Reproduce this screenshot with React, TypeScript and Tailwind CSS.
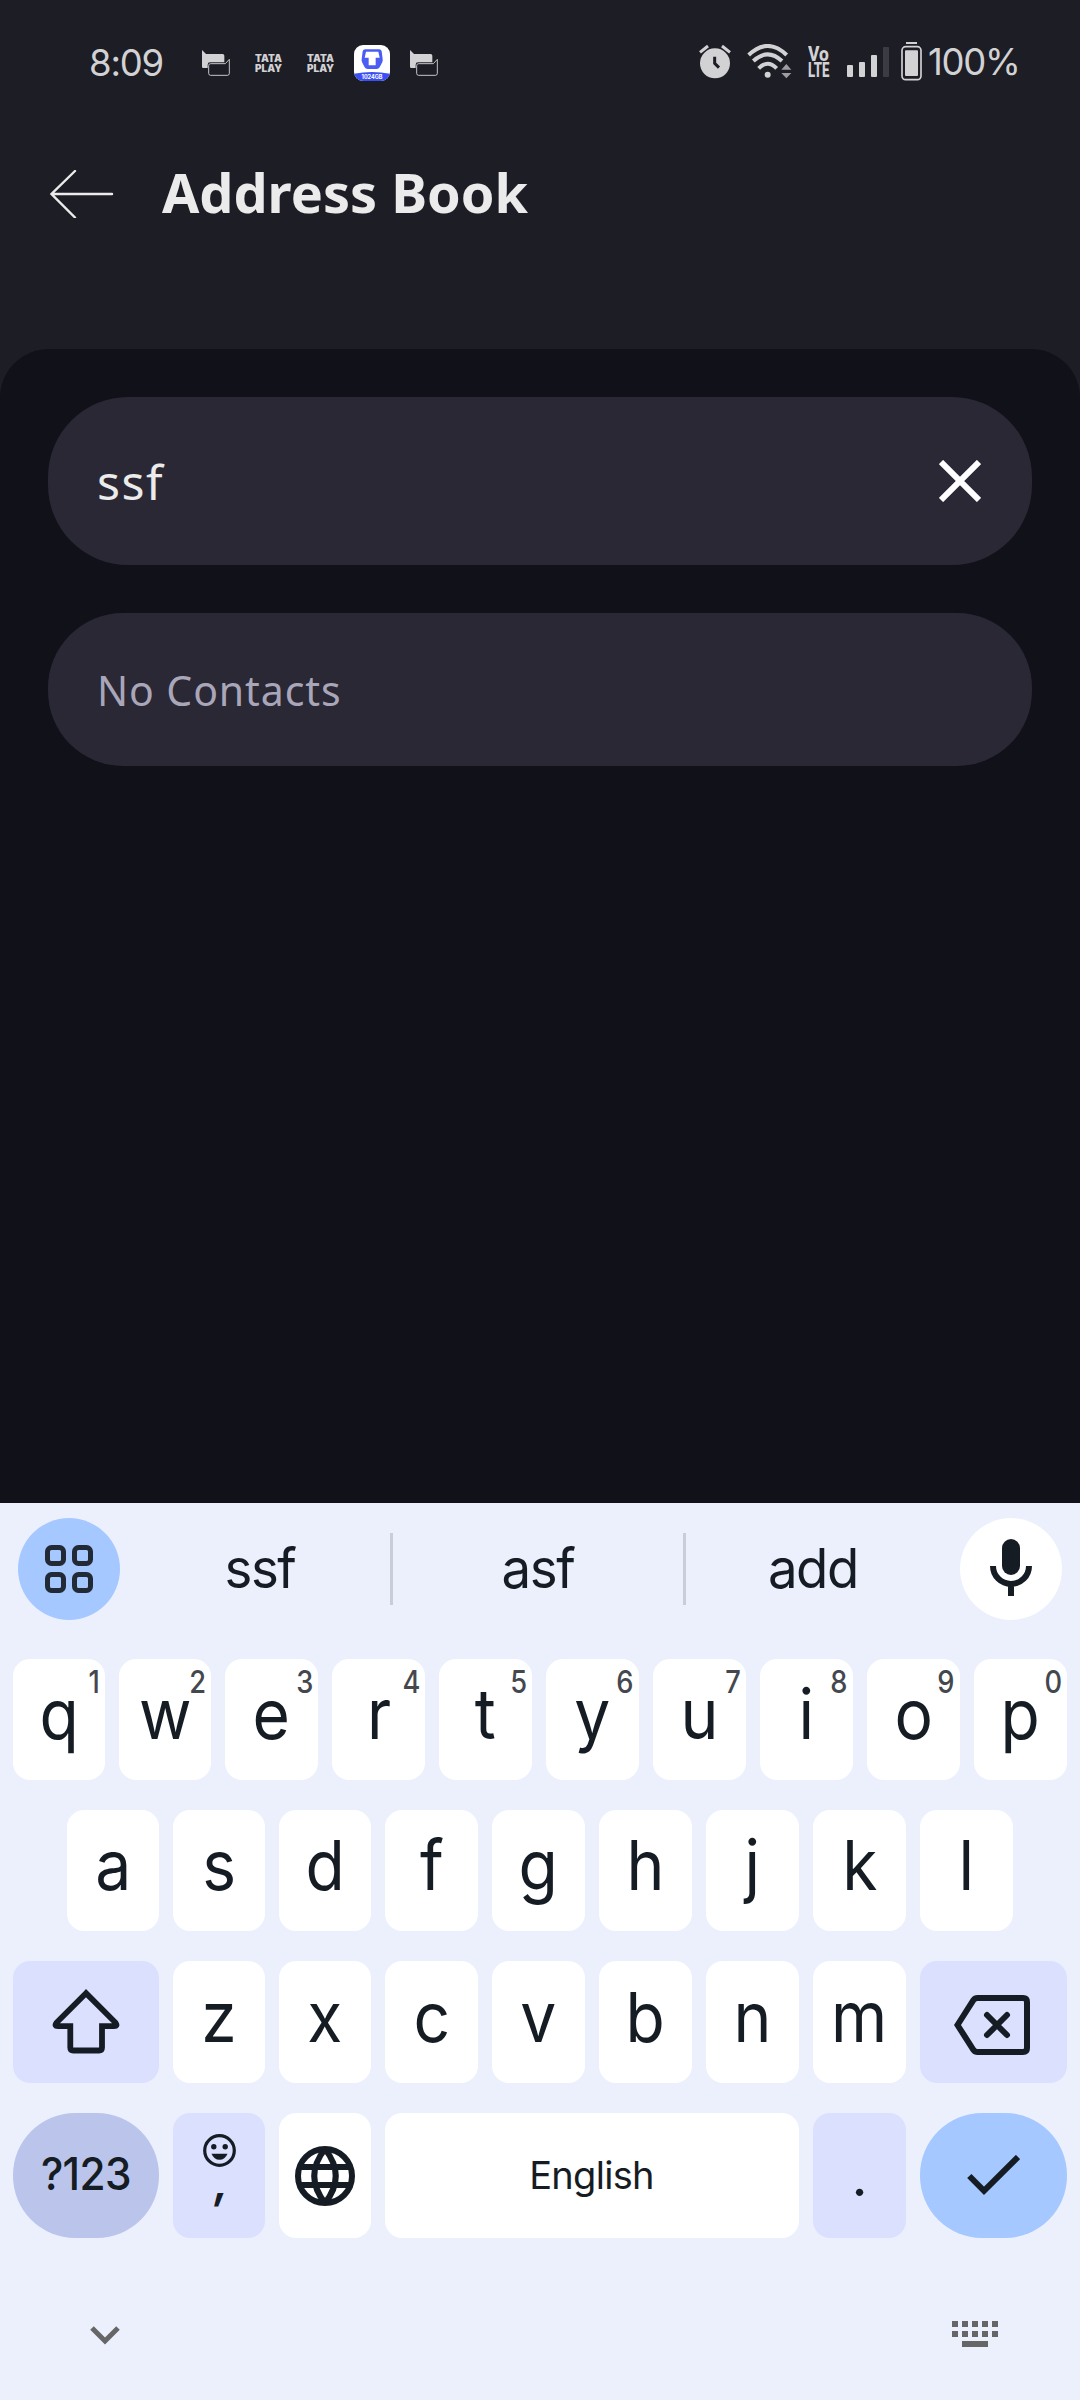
import type { ReactNode } from "react";

function ChatIcon() {
  return (
    <svg className="h-[27px] w-[28px]" viewBox="0 0 84 81" fill="none">
      <path d="M0 0 L12 12 H62 Q67 12 67 17 V37 H24 Q17 37 17 44 V54 H4 Q0 54 0 50 Z" fill="#d2d2d4" />
      <path d="M20 47 Q20 41 26 41 H70 L82 28 V70 Q82 76 76 76 H26 Q20 76 20 70 Z" stroke="#c4c4c8" strokeWidth="3" />
    </svg>
  );
}

function TataPlay() {
  return (
    <div className="flex w-[26px] flex-col font-['Inter'] text-[10px] font-black leading-[10px] text-[#d2d2d4]">
      <span>TATA</span>
      <span>PLAY</span>
    </div>
  );
}

function CloudAppIcon() {
  return (
    <div className="relative h-9 w-9 overflow-hidden rounded-[9px] bg-white">
      <svg className="h-9 w-9" viewBox="0 0 108 108">
        <path d="M34 13 H75 Q82 13 83 19 L86 42 Q87 48 84 53 L77 67 Q74 72 68 72 H41 Q35 72 32 67 L25 53 Q22 48 23 42 L26 19 Q27 13 34 13 Z" fill="#4b5cf5" />
        <path d="M36 20 H73 L77 38 H65 V61 H44 V38 H32 Z" fill="#fff" />
        <path d="M0 86 Q54 76 108 86 V108 H0 Z" fill="#3b50f3" />
      </svg>
      <span className="absolute inset-x-0 bottom-[1px] text-center font-['Inter'] text-[5.5px] font-bold leading-[6px] text-white">1024GB</span>
    </div>
  );
}

function AlarmIcon() {
  return (
    <svg className="h-[35px] w-[32px]" viewBox="0 0 96 105">
      <circle cx="48" cy="58" r="45" fill="#d2d2d4" />
      <path d="M3 25 L27 6 M93 25 L69 6" stroke="#d2d2d4" strokeWidth="9" />
      <path d="M47 38 V58 L60 71" stroke="#1d1d25" strokeWidth="9" fill="none" />
    </svg>
  );
}

function WifiIcon() {
  return (
    <svg className="h-[35px] w-[45px]" viewBox="0 0 135 105" fill="none">
      <g stroke="#d2d2d4" strokeWidth="12">
        <path d="M5 33 Q62 -21 119 33" />
        <path d="M19 51 Q62 11 105 51" />
        <path d="M35 73 Q62 46 89 73" />
      </g>
      <circle cx="62" cy="92" r="9" fill="#d2d2d4" />
      <path d="M103 77 L118 60 L133 77 Z M103 87 L118 103 L133 87 Z" fill="#9c9ca1" />
    </svg>
  );
}

function StatusBar() {
  return (
    <header className="flex h-[125px] items-start justify-between pl-[89px] pr-[61px] pt-[43px]">
      <div className="flex h-10 items-center">
        <span className="w-[76px] font-['Inter'] text-[36.5px] leading-10 tracking-[-1.2px] text-[#d2d2d4]">8:09</span>
        <span className="ml-[37px] flex"><ChatIcon /></span>
        <span className="ml-[25px] flex"><TataPlay /></span>
        <span className="ml-[26px] flex"><TataPlay /></span>
        <span className="ml-[21px] flex"><CloudAppIcon /></span>
        <span className="ml-[20px] flex"><ChatIcon /></span>
      </div>
      <div className="flex h-[37px] items-center">
        <AlarmIcon />
        <span className="ml-[16px] flex"><WifiIcon /></span>
        <div className="ml-[16px] flex w-[22px] flex-col font-['Roboto'] text-[20px] font-extrabold leading-[16px] text-[#d2d2d4]">
          <span className="origin-left scale-x-[0.87]">Vo</span>
          <span className="origin-left scale-x-[0.66]">LTE</span>
        </div>
        <div className="ml-[17px] flex h-[30px] items-end gap-[6px]">
          <i className="h-[12px] w-[6px] rounded-[1px] bg-[#d2d2d4]" />
          <i className="h-[15px] w-[6px] rounded-[1px] bg-[#d2d2d4]" />
          <i className="h-[22px] w-[6px] rounded-[1px] bg-[#d2d2d4]" />
          <i className="h-[30px] w-[6px] rounded-[1px] bg-[#3b3b44]" />
        </div>
        <svg className="ml-[12px] h-[39px] w-[21px]" viewBox="0 0 63 117">
          <rect x="15" y="0" width="33" height="6" fill="#d2d2d4" />
          <rect x="3" y="14" width="57" height="99" rx="11" fill="none" stroke="#d2d2d4" strokeWidth="5" />
          <rect x="12" y="25" width="39" height="77" rx="3" fill="#d2d2d4" />
        </svg>
        <span className="ml-[6px] w-[91px] whitespace-nowrap font-['Inter'] text-[36.5px] leading-10 tracking-[-1.3px] text-[#d2d2d4]">100%</span>
      </div>
    </header>
  );
}

const keyBase = "flex rounded-[17px] text-[#161c24] font-['Inter']";

function LetterKey({ label, hint, narrow }: { label: string; hint?: string; narrow?: boolean }) {
  return (
    <button className={`${keyBase} ${narrow ? "w-[92px]" : "w-[93px]"} relative h-full items-center justify-center bg-white pb-[10px] text-[69px] leading-none`}>
      <span className="scale-x-[0.93]">{label}</span>
      {hint && (
        <span className="absolute right-[5px] top-[7px] origin-right scale-x-[0.88] font-['Inter'] text-[31px] font-medium leading-[32px] text-[#44484e]">{hint}</span>
      )}
    </button>
  );
}

function Suggestion({ children }: { children: ReactNode }) {
  return (
    <span className="pb-[3px] text-center font-['Inter'] text-[55px] leading-[72px] tracking-[-1.5px] text-[#161c24]">
      <span className="inline-block scale-x-[0.96]">{children}</span>
    </span>
  );
}

function Keyboard() {
  return (
    <section className="h-[897px] bg-[#ecf0fd]">
      <div className="flex items-center px-[18px] pt-[15px]">
        <button className="flex size-[102px] items-center justify-center rounded-full bg-[#a4c8ff]">
          <svg className="size-12" viewBox="0 0 48 48" fill="none" stroke="#222a36" strokeWidth="5">
            <rect x="2.5" y="2.5" width="16" height="16" rx="4" />
            <rect x="29.5" y="2.5" width="16" height="16" rx="4" />
            <rect x="2.5" y="29.5" width="16" height="16" rx="4" />
            <rect x="29.5" y="29.5" width="16" height="16" rx="4" />
          </svg>
        </button>
        <div className="grid flex-1 grid-cols-[260px_3px_290px_3px_254px] items-center pl-[10px]">
          <Suggestion>ssf</Suggestion>
          <i className="h-[72px] w-[3px] bg-[#c9cdd9]" />
          <Suggestion>asf</Suggestion>
          <i className="h-[72px] w-[3px] bg-[#c9cdd9]" />
          <Suggestion>add</Suggestion>
        </div>
        <button className="flex size-[102px] items-center justify-center rounded-full bg-white">
          <svg className="mb-[3px] h-[57px] w-[42px]" viewBox="0 0 42 57" fill="none">
            <rect x="12" y="0" width="18" height="36" rx="9" fill="#161c24" />
            <path d="M3 27 A18 18 0 0 0 39 27 M21 44 V57" stroke="#161c24" strokeWidth="6" />
          </svg>
        </button>
      </div>

      <div className="mt-[39px] flex flex-col gap-[30px] px-[13px]">
        <div className="flex h-[121px] justify-between">
          {"qwertyuiop".split("").map((k, i) => (
            <LetterKey key={k} label={k} hint={String((i + 1) % 10)} narrow={i < 2} />
          ))}
        </div>
        <div className="flex h-[121px] justify-between px-[54px]">
          {"asdfghjkl".split("").map((k, i) => <LetterKey key={k} label={k} narrow={i < 3} />)}
        </div>
        <div className="flex h-[122px] justify-between">
          <button className={`${keyBase} w-[146px] items-center justify-center bg-[#dce0ff]`}>
            <svg className="h-[66px] w-[68px]" viewBox="52 1989 68 66" fill="none" stroke="#161c24" strokeWidth="5.8">
              <path d="M86 1993.2 L56.4 2022.8 Q54 2026.2 58 2026.2 H70.3 V2047.5 Q70.3 2050.5 73.3 2050.5 H99 Q102 2050.5 102 2047.5 V2026.2 H114 Q118 2026.2 115.6 2022.8 Z" />
            </svg>
          </button>
          {"zxcvbnm".split("").map((k, i) => <LetterKey key={k} label={k} narrow={i < 2} />)}
          <button className={`${keyBase} w-[147px] items-center justify-center bg-[#dce0ff]`}>
            <svg className="ml-[-3px] mt-[5px] h-[60px] w-[76px]" viewBox="954 1995 76 60" fill="none" stroke="#161c24" strokeWidth="6">
              <path d="M957.5 2025 L973.5 2000 Q975 1998 977.5 1998 H1023 Q1027 1998 1027 2002 V2048 Q1027 2052 1023 2052 H977.5 Q975 2052 973.5 2050 Z" />
              <path d="M987 2015 L1007 2035 M1007 2015 L987 2035" strokeLinecap="round" />
            </svg>
          </button>
        </div>
        <div className="flex h-[125px] justify-between">
          <button className="flex w-[146px] items-center justify-center rounded-[62px] bg-[#bbc5eb] pb-[3px] font-['Inter'] text-[45px] font-medium tracking-[-0.6px] text-[#161c24]">
            <span className="scale-x-[0.94]">?123</span>
          </button>
          <button className={`${keyBase} w-[92px] flex-col items-center bg-[#dce0ff] pt-[21px]`}>
            <svg className="size-[33px]" viewBox="0 0 33 33">
              <circle cx="16.5" cy="16.5" r="14.8" fill="none" stroke="#161c24" strokeWidth="3.2" />
              <circle cx="10.8" cy="12.7" r="2.7" fill="#161c24" />
              <circle cx="22.2" cy="12.7" r="2.7" fill="#161c24" />
              <path d="M8.5 19.7 H24.5 Q22 25.8 16.5 25.8 Q11 25.8 8.5 19.7 Z" fill="#161c24" />
            </svg>
            <span className="ml-[4px] -skew-x-6 text-[46px] font-semibold leading-[28px]">,</span>
          </button>
          <button className={`${keyBase} w-[92px] items-center justify-center bg-white`}>
            <svg className="size-[60px]" viewBox="0 0 60 60" fill="none" stroke="#161c24" strokeWidth="6">
              <circle cx="30" cy="30" r="27" />
              <path d="M5 21 H55 M5 39 H55 M30 3 Q8.500 30 30 57 M30 3 Q51.500 30 30 57" />
            </svg>
          </button>
          <button className={`${keyBase} w-[414px] items-center justify-center bg-white pb-[1px] pr-[1px] text-[38px] tracking-[-0.7px]`}>English</button>
          <button className={`${keyBase} w-[93px] items-center justify-center bg-[#dce0ff] pt-[1px] text-[56px]`}>.</button>
          <button className="flex w-[147px] items-center justify-center rounded-[62px] bg-[#a4c8ff]">
            <svg className="h-[41px] w-[53px]" viewBox="967 2156 53 41" fill="none" stroke="#161c24" strokeWidth="6">
              <path d="M969.3 2177 L984 2191.8 L1018 2158" />
            </svg>
          </button>
        </div>
      </div>

      <div className="flex items-start justify-between pl-[90px] pr-[82px] pt-[83px]">
        <svg className="mt-[5px] h-[19px] w-[30px]" viewBox="0 0 30 19" fill="none" stroke="#666" strokeWidth="5">
          <path d="M2 2 L15 15 L28 2" />
        </svg>
        <svg className="h-[26px] w-[46px]" viewBox="0 0 46 26" fill="#666">
          {[0, 10, 20, 30, 40].map((x) => (
            <g key={x}>
              <rect x={x} y="0" width="6" height="6" />
              <rect x={x} y="10" width="6" height="6" />
            </g>
          ))}
          <rect x="10" y="20" width="26" height="6" />
        </svg>
      </div>
    </section>
  );
}

export default function App() {
  return (
    <div className="flex h-[2400px] w-[1080px] flex-col overflow-hidden bg-[#1d1d25]">
      <StatusBar />
      <div className="flex h-[224px] items-start pl-[50px] pt-[27px]">
        <svg className="mt-[18px] h-[48px] w-[64px]" viewBox="50 169.500 64 48" fill="none" stroke="#ebebeb" strokeWidth="2.4" strokeLinecap="round">
          <path d="M112 193.500 H51.500 M75 170.500 L51.500 193.500 L75 217" />
        </svg>
        <h1 className="ml-[48px] font-['Noto_Sans'] text-[54px] font-bold leading-[80px] text-[#ebebeb]">Address Book</h1>
      </div>
      <main className="flex flex-1 flex-col gap-12 rounded-t-[49px] bg-[#111119] px-12 pt-12">
        <div className="flex h-[168px] items-center justify-between rounded-[80px] bg-[#2a2835] px-[49px]">
          <span className="pt-[1px] font-['Noto_Sans'] text-[48px] tracking-[1.5px] text-[#ebebeb]">ssf</span>
          <svg className="mr-[2px] size-[42px]" viewBox="0 0 42 42" stroke="#fff" strokeWidth="6">
            <path d="M2 2 L40 40 M40 2 L2 40" />
          </svg>
        </div>
        <div className="flex h-[153px] items-center rounded-[75px] bg-[#2a2835] px-[49px]">
          <span className="pt-[2px] font-['Noto_Sans'] text-[41px] tracking-[0.9px] text-[#a9a6b9]">No Contacts</span>
        </div>
      </main>
      <Keyboard />
    </div>
  );
}
